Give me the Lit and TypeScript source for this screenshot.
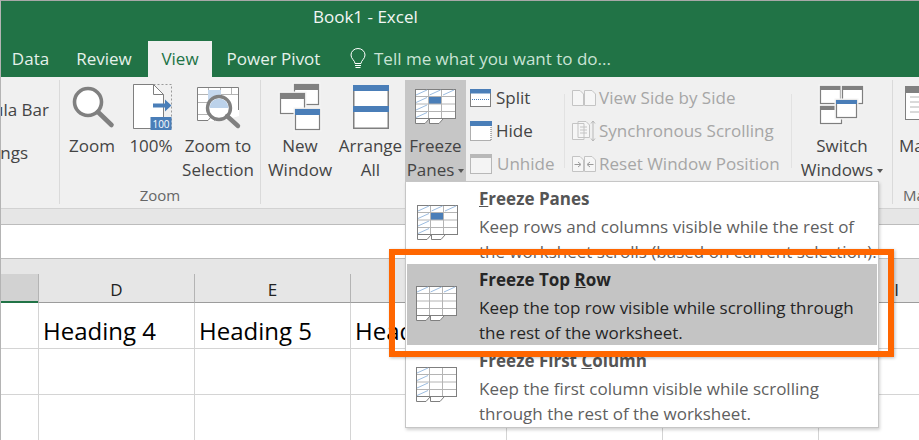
import { LitElement, html, css, svg } from "lit";
import { customElement } from "lit/decorators.js";

const GR = "#7f7f7f";
const BL = "#4a7eb8";

function freezeIcon(top: boolean, left: boolean, cell: boolean) {
  const diag = (x: number, y: number) => svg`<line x1=${x + 1} y1=${y + 6} x2=${x + 12} y2=${y + 1} stroke="#9dbde0" stroke-width="1"/>`;
  return html`<svg class="fz" width="41" height="35" viewBox="0 0 41 35">
    <rect x="0.5" y="0.5" width="40" height="29" fill="#fff" stroke=${GR}/>
    ${cell ? svg`<rect x="14" y="8" width="12" height="7" fill=${BL}/>` : ""}
    <path d="M0 7.5H41M0 15H41M0 22.5H41M13.5 0V30M26.5 0V30" stroke="#b4b4b4" fill="none"/>
    <rect x="0.5" y="0.5" width="40" height="29" fill="none" stroke=${GR}/>
    ${top ? [diag(0, 0), diag(13.5, 0), diag(27, 0)] : ""}
    ${left ? [...(top ? [] : [diag(0, 0)]), diag(0, 7.5), diag(0, 15), diag(0, 22.5)] : ""}
    <path d="M0.5 30V34.5H10L14 30M14.5 30V34.5H24L28 30" stroke=${GR} fill="#fff"/>
  </svg>`;
}

function win(x: number, y: number, w: number, h: number, t: string, th: number) {
  return svg`<rect x=${x - 1.5} y=${y - 1.5} width=${w + 3} height=${h + 3} fill="#f4f4f4"/>
    <rect x=${x + 0.5} y=${y + 0.5} width=${w - 1} height=${h - 1} fill="#fff" stroke=${GR} stroke-width="1.2"/>
    <rect x=${x} y=${y} width=${w} height=${th} fill=${t}/>`;
}

const zoomIcon = html`<svg width="50" height="54" viewBox="0 0 50 54">
  <circle cx="21" cy="22" r="13.5" fill="#fff" stroke="#808080" stroke-width="3.6"/>
  <line x1="31" y1="32" x2="44.5" y2="45" stroke="#808080" stroke-width="4.6" stroke-linecap="round"/>
</svg>`;

const pctIcon = html`<svg width="50" height="54" viewBox="0 0 50 54">
  <rect x="7.5" y="4.5" width="38" height="44" fill="none" stroke="#9a9a9a" stroke-dasharray="2 2"/>
  <path d="M7.5 4.5H27.5L37.5 14.5V48.5H7.5Z" fill="#fff" stroke=${GR}/>
  <path d="M27.5 4.5V14.5H37.5" fill="none" stroke=${GR}/>
  <path d="M27 23.5H39V19.5L45.5 25.5L39 31.5V27.5H27Z" fill=${BL}/>
  <rect x="24.5" y="37" width="21" height="13" fill=${BL}/>
  <text class="hundred" x="35" y="47.5" text-anchor="middle">100</text>
</svg>`;

const selIcon = html`<svg width="54" height="54" viewBox="0 0 54 54">
  <path d="M6.5 7.5H48V36L30 41H6.5Z" fill="#fff"/>
  <path d="M6.5 14.5H47.5M6.5 22.5H20M6.5 34.5H20M17.5 7.5V14.5M29.5 7.5V14.5M40.5 7.5V14.5" stroke="#b4b4b4" fill="none"/>
  <path d="M6.5 40.5V7.5H47.5V30" stroke=${GR} fill="none"/>
  <path d="M6.5 40.5H17L20 37L24 40.5" stroke=${GR} fill="#fff"/>
  <path d="M17 10H30V22H17Z" fill="#c5d8ee"/>
  <circle cx="28" cy="28" r="11.5" fill="#fff" stroke="#808080" stroke-width="3.4"/>
  <path d="M18.5 28A9.5 9.5 0 0 1 37.5 28Z" fill="#bcd2ea"/>
  <line x1="36" y1="36" x2="47" y2="46" stroke="#808080" stroke-width="4.4" stroke-linecap="round"/>
</svg>`;

const newWinIcon = html`<svg width="44" height="54" viewBox="0 0 44 54">
  ${win(16, 4, 25, 21, "#808080", 6)}
  ${win(2, 13, 25, 21, "#808080", 6)}
  ${win(17, 29, 25, 21, BL, 6)}
</svg>`;

const arrangeIcon = html`<svg width="40" height="54" viewBox="0 0 40 54">
  <rect x="2.75" y="5.75" width="34.5" height="42.5" fill="#fff" stroke=${GR} stroke-width="1.5"/>
  <rect x="2" y="5" width="36" height="6" fill=${BL}/>
  <rect x="2" y="26" width="36" height="6" fill=${BL}/>
</svg>`;

const splitIcon = html`<svg class="si" width="22" height="20" viewBox="0 0 22 20">
  <rect x="0.5" y="1.5" width="20" height="17" fill="#fff" stroke=${GR}/>
  <rect x="0" y="1" width="21" height="4.5" fill=${BL}/>
  <line x1="2" y1="11.5" x2="19" y2="11.5" stroke=${BL} stroke-dasharray="1 1"/>
</svg>`;

const hideIcon = html`<svg class="si" width="22" height="22" viewBox="0 0 22 22">
  <rect x="0.5" y="1.5" width="20.5" height="19" fill="#fff" stroke="#666" stroke-dasharray="1 1"/>
  <rect x="0" y="1" width="22" height="5" fill=${BL}/>
</svg>`;

const unhideIcon = html`<svg class="si" width="23" height="22" viewBox="0 0 23 22">
  <rect x="0.5" y="1.5" width="21" height="19" fill="#f4f4f4" stroke="#b8b8b8"/>
  <rect x="0" y="1" width="22" height="4" fill="#b8b8b8"/>
</svg>`;

const sideIcon = html`<svg width="24" height="18" viewBox="0 0 24 18">
  <path d="M0.5 1.5H8L11.5 5V16.5H0.5ZM12.5 1.5H20L23.5 5V16.5H12.5Z" fill="#f6f6f6" stroke="#c4c4c4"/>
</svg>`;

const syncIcon = html`<svg width="24" height="24" viewBox="0 0 24 24">
  <path d="M0.5 4.5H12V20.5H0.5Z M6 2.5H14L17.5 6V18.5H6Z" fill="#f6f6f6" stroke="#c4c4c4"/>
  <path d="M8 8H15M8 11H15M8 14H15" stroke="#c4c4c4"/>
  <path d="M21 2V22M19 4.5L21 2L23 4.5M19 19.5L21 22L23 19.5" stroke="#b8b8b8" fill="none"/>
</svg>`;

const resetIcon = html`<svg width="24" height="18" viewBox="0 0 24 18">
  <path d="M0.5 1.5H8L11.5 5V16.5H0.5ZM12.5 1.5H20L23.5 5V16.5H12.5Z" fill="#f6f6f6" stroke="#c4c4c4"/>
  <path d="M2.5 9.5H8M6 7L9 9.5L6 12M21.5 9.5H16M18 7L15 9.5L18 12" stroke="#9a9a9a" fill="none"/>
</svg>`;

const switchIcon = html`<svg width="50" height="54" viewBox="0 0 50 54">
  ${win(3, 6, 21, 18, "#808080", 4)}
  ${win(25, 6, 21, 18, "#808080", 4)}
  ${win(3, 26, 22, 18, "#808080", 4)}
  ${win(19, 20, 21, 18, BL, 4)}
</svg>`;

const macroIcon = html`<svg width="50" height="54" viewBox="0 0 50 54">
  <rect x="0.5" y="6.5" width="36" height="33" fill="#fff" stroke=${GR}/>
  <rect x="0" y="6" width="37" height="7" fill="#808080"/>
  <path d="M5 17H32M5 22H32M5 27H32M5 32H32" stroke="#b4b4b4"/>
</svg>`;

const bulb = html`<svg class="bulb" width="16" height="22" viewBox="0 0 16 22">
  <path d="M5 15.5C5 12.5 1 11 1 7A7 6.5 0 0 1 15 7C15 11 11 12.5 11 15.5Z" fill="none" stroke="#fff"/>
  <path d="M5 17.5H11M5.5 19.5H10.5" stroke="#fff" stroke-width="1.2"/>
</svg>`;

const COLS = ["D", "E", "F", "G", "H", "I"];

@customElement("app-root")
export class AppRoot extends LitElement {
  static styles = css`
    :host { display: block; width: 919px; height: 440px; }
    * { box-sizing: border-box; }
    .page {
      position: relative; width: 919px; height: 440px; overflow: hidden; background: #fff;
      font-family: "Open Sans", "Noto Sans", sans-serif; font-size: 17px; color: #444;
      border-left: 1px solid #b4b4b4; border-top: 1px solid #a8a8a8;
    }
    .title {
      height: 40px; background: #217346; color: #f2f7f4; font-size: 17px;
      padding-left: 312px; line-height: 32px; white-space: nowrap;
    }
    .tabs { height: 36px; background: #217346; display: flex; color: #e6f1eb; line-height: 36px; white-space: nowrap; }
    .tab { text-align: center; }
    .t1 { width: 59px; } .t2 { width: 88px; }
    .t3 { width: 64px; background: #f0f0f0; color: #217346; }
    .t4 { width: 123px; }
    .tell { display: flex; align-items: center; padding-left: 15px; color: #c9e3d5; gap: 8px; }
    .ribbon { height: 132px; background: #f0f0f0; border-bottom: 1px solid #d2d2d2; display: flex; padding-top: 3px; overflow: hidden; }
    .group { height: 124px; border-right: 1px solid #dadada; display: flex; flex-direction: column; flex: none; }
    .gbody { height: 107px; display: flex; }
    .glabel { height: 17px; line-height: 17px; text-align: center; font-size: 15px; color: #666; }
    .g1 { width: 59px; }
    .showcol { display: flex; flex-direction: column; width: 58px; overflow: hidden; padding-top: 18px; gap: 19px; }
    .showrow { display: flex; justify-content: flex-end; white-space: nowrap; line-height: 24px; }
    .pr1 { padding-right: 10px; } .pr2 { padding-right: 31px; }
    .g2 { width: 201px; }
    .g2 .gbody { padding-left: 4px; }
    .g3 { width: 632px; }
    .g3 .gbody { padding-left: 3px; }
    .big { display: flex; flex-direction: column; align-items: center; height: 101px; flex: none; text-align: center; white-space: nowrap; }
    .lbl { line-height: 24px; }
    .ic { height: 54px; display: flex; justify-content: center; flex: none; }
    .ic svg { display: block; }
    .ic .fz { margin-top: 9px; }
    .w56 { width: 56px; } .w62 { width: 62px; } .w72 { width: 72px; } .w69 { width: 69px; } .w61 { width: 61px; } .w100 { width: 100px; }
    .active { background: #c6c6c6; }
    .caret { display: inline-block; width: 0; height: 0; border: 3.5px solid transparent; border-top: 4px solid #555; border-bottom: 0; margin-left: 4px; vertical-align: 3px; }
    .small1 { width: 98px; padding: 1px 0 0 4px; }
    .small2 { width: 226px; padding: 1px 0 0 7px; }
    .sep { width: 1px; height: 74px; margin-top: 14px; background: #e2e2e2; flex: none; }
    .srow { height: 33px; display: flex; align-items: center; white-space: nowrap; }
    .si { margin-right: 4px; flex: none; }
    .srow2 svg { margin-right: 3px; flex: none; }
    .off { color: #a6a6a6; }
    .g4 { flex: 1; }
    .macro { padding-left: 6px; width: 90px; line-height: 24px; white-space: nowrap; }
    .macro svg { margin-left: 6px; display: block; }
    .glabel.left { text-align: left; padding-left: 10px; white-space: nowrap; }
    .hundred { font-size: 10px; fill: #fff; font-family: "Open Sans", sans-serif; }
    .band { height: 16px; background: #e6e6e6; border-bottom: 1px solid #bcbcbc; }
    .fbar { height: 34px; background: #fff; border-bottom: 1px solid #bcbcbc; }
    .hdr { height: 44px; background: #e6e6e6; padding-top: 15px; display: flex; }
    .hsel { width: 37px; background: #d2d2d2; border-bottom: 2px solid #217346; flex: none; }
    .hcol { width: 156px; flex: none; text-align: center; line-height: 31px; color: #222; border-left: 1px solid #b4b4b4; border-bottom: 1px solid #9c9c9c; }
    .row { display: flex; height: 46px; }
    .c0 { width: 37px; flex: none; border-bottom: 1px solid #d4d4d4; }
    .c { width: 156px; flex: none; border-left: 1px solid #d4d4d4; border-bottom: 1px solid #d4d4d4; font-size: 24px; color: #000; padding-left: 4px; line-height: 56px; white-space: nowrap; overflow: hidden; }
    .menu {
      position: absolute; left: 404px; top: 180px; width: 474px; height: 247px; padding: 1px;
      background: #fff; border: 1px solid #c6c6c6; box-shadow: 1px 2px 3px rgba(0,0,0,.18);
    }
    .item { height: 81px; display: flex; padding-left: 9px; }
    .item.hl { background: #c4c4c4; }
    .item svg { margin-top: 22px; flex: none; display: block; }
    .item.first svg { margin-left: 1px; margin-right: -1px; }
    .itx { margin-left: 22px; padding-top: 4px; white-space: nowrap; color: #5f5f5f; }
    .ittl { font-weight: 700; line-height: 24px; font-size: 17px; color: #555; }
    .ides { line-height: 25px; margin-top: 3px; font-size: 17px; }
    .hl .itx, .hl .ittl { color: #262626; }
    .frame {
      position: absolute; left: 388px; top: 248px; width: 505px; height: 108px;
      border: 6px solid #ff6600; box-shadow: 1px 1px 3px rgba(0,0,0,.25);
    }
  `;

  private item(ic: unknown, title: unknown, l1: string, l2: string, cls = "") {
    return html`<div class="item ${cls}">
      ${ic}
      <div class="itx">
        <div class="ittl">${title}</div>
        <div class="ides">${l1}<br />${l2}</div>
      </div>
    </div>`;
  }

  render() {
    return html`<div class="page">
      <div class="title">Book1 - Excel</div>
      <div class="tabs">
        <div class="tab t1">Data</div>
        <div class="tab t2">Review</div>
        <div class="tab t3">View</div>
        <div class="tab t4">Power Pivot</div>
        <div class="tell">${bulb}<span>Tell me what you want to do...</span></div>
      </div>
      <div class="ribbon">
        <div class="group g1">
          <div class="gbody">
            <div class="showcol">
              <div class="showrow pr1">Formula Bar</div>
              <div class="showrow pr2">Headings</div>
            </div>
          </div>
        </div>
        <div class="group g2">
          <div class="gbody">
            <div class="big w56"><div class="ic">${zoomIcon}</div><div class="lbl">Zoom</div></div>
            <div class="big w62"><div class="ic">${pctIcon}</div><div class="lbl">100%</div></div>
            <div class="big w72"><div class="ic">${selIcon}</div><div class="lbl">Zoom to<br />Selection</div></div>
          </div>
          <div class="glabel">Zoom</div>
        </div>
        <div class="group g3">
          <div class="gbody">
            <div class="big w72"><div class="ic">${newWinIcon}</div><div class="lbl">New<br />Window</div></div>
            <div class="big w69"><div class="ic">${arrangeIcon}</div><div class="lbl">Arrange<br />All</div></div>
            <div class="big w61 active"><div class="ic">${freezeIcon(true, true, true)}</div><div class="lbl">Freeze<br />Panes<span class="caret"></span></div></div>
            <div class="small1">
              <div class="srow">${splitIcon}Split</div>
              <div class="srow">${hideIcon}Hide</div>
              <div class="srow off">${unhideIcon}Unhide</div>
            </div>
            <div class="sep"></div>
            <div class="small2 off">
              <div class="srow srow2">${sideIcon}View Side by Side</div>
              <div class="srow srow2">${syncIcon}Synchronous Scrolling</div>
              <div class="srow srow2">${resetIcon}Reset Window Position</div>
            </div>
            <div class="sep"></div>
            <div class="big w100"><div class="ic">${switchIcon}</div><div class="lbl">Switch<br />Windows<span class="caret"></span></div></div>
          </div>
        </div>
        <div class="group g4">
          <div class="gbody">
            <div class="macro">${macroIcon}Macros</div>
          </div>
          <div class="glabel left">Macros</div>
        </div>
      </div>
      <div class="band"></div>
      <div class="fbar"></div>
      <div class="hdr">
        <div class="hsel"></div>
        ${COLS.map((c) => html`<div class="hcol">${c}</div>`)}
      </div>
      <div class="row">
        <div class="c0"></div>
        ${COLS.map((_, i) => html`<div class="c">${i < 3 ? `Heading ${i + 4}` : ""}</div>`)}
      </div>
      <div class="row"><div class="c0"></div>${COLS.map(() => html`<div class="c"></div>`)}</div>
      <div class="row"><div class="c0"></div>${COLS.map(() => html`<div class="c"></div>`)}</div>
      <div class="menu">
        ${this.item(freezeIcon(true, true, true), html`<u>F</u>reeze Panes`,
          "Keep rows and columns visible while the rest of",
          "the worksheet scrolls (based on current selection).", "first")}
        ${this.item(freezeIcon(true, false, false), html`Freeze Top <u>R</u>ow`,
          "Keep the top row visible while scrolling through",
          "the rest of the worksheet.", "hl")}
        ${this.item(freezeIcon(false, true, false), html`Freeze First <u>C</u>olumn`,
          "Keep the first column visible while scrolling",
          "through the rest of the worksheet.")}
      </div>
      <div class="frame"></div>
    </div>`;
  }
}
